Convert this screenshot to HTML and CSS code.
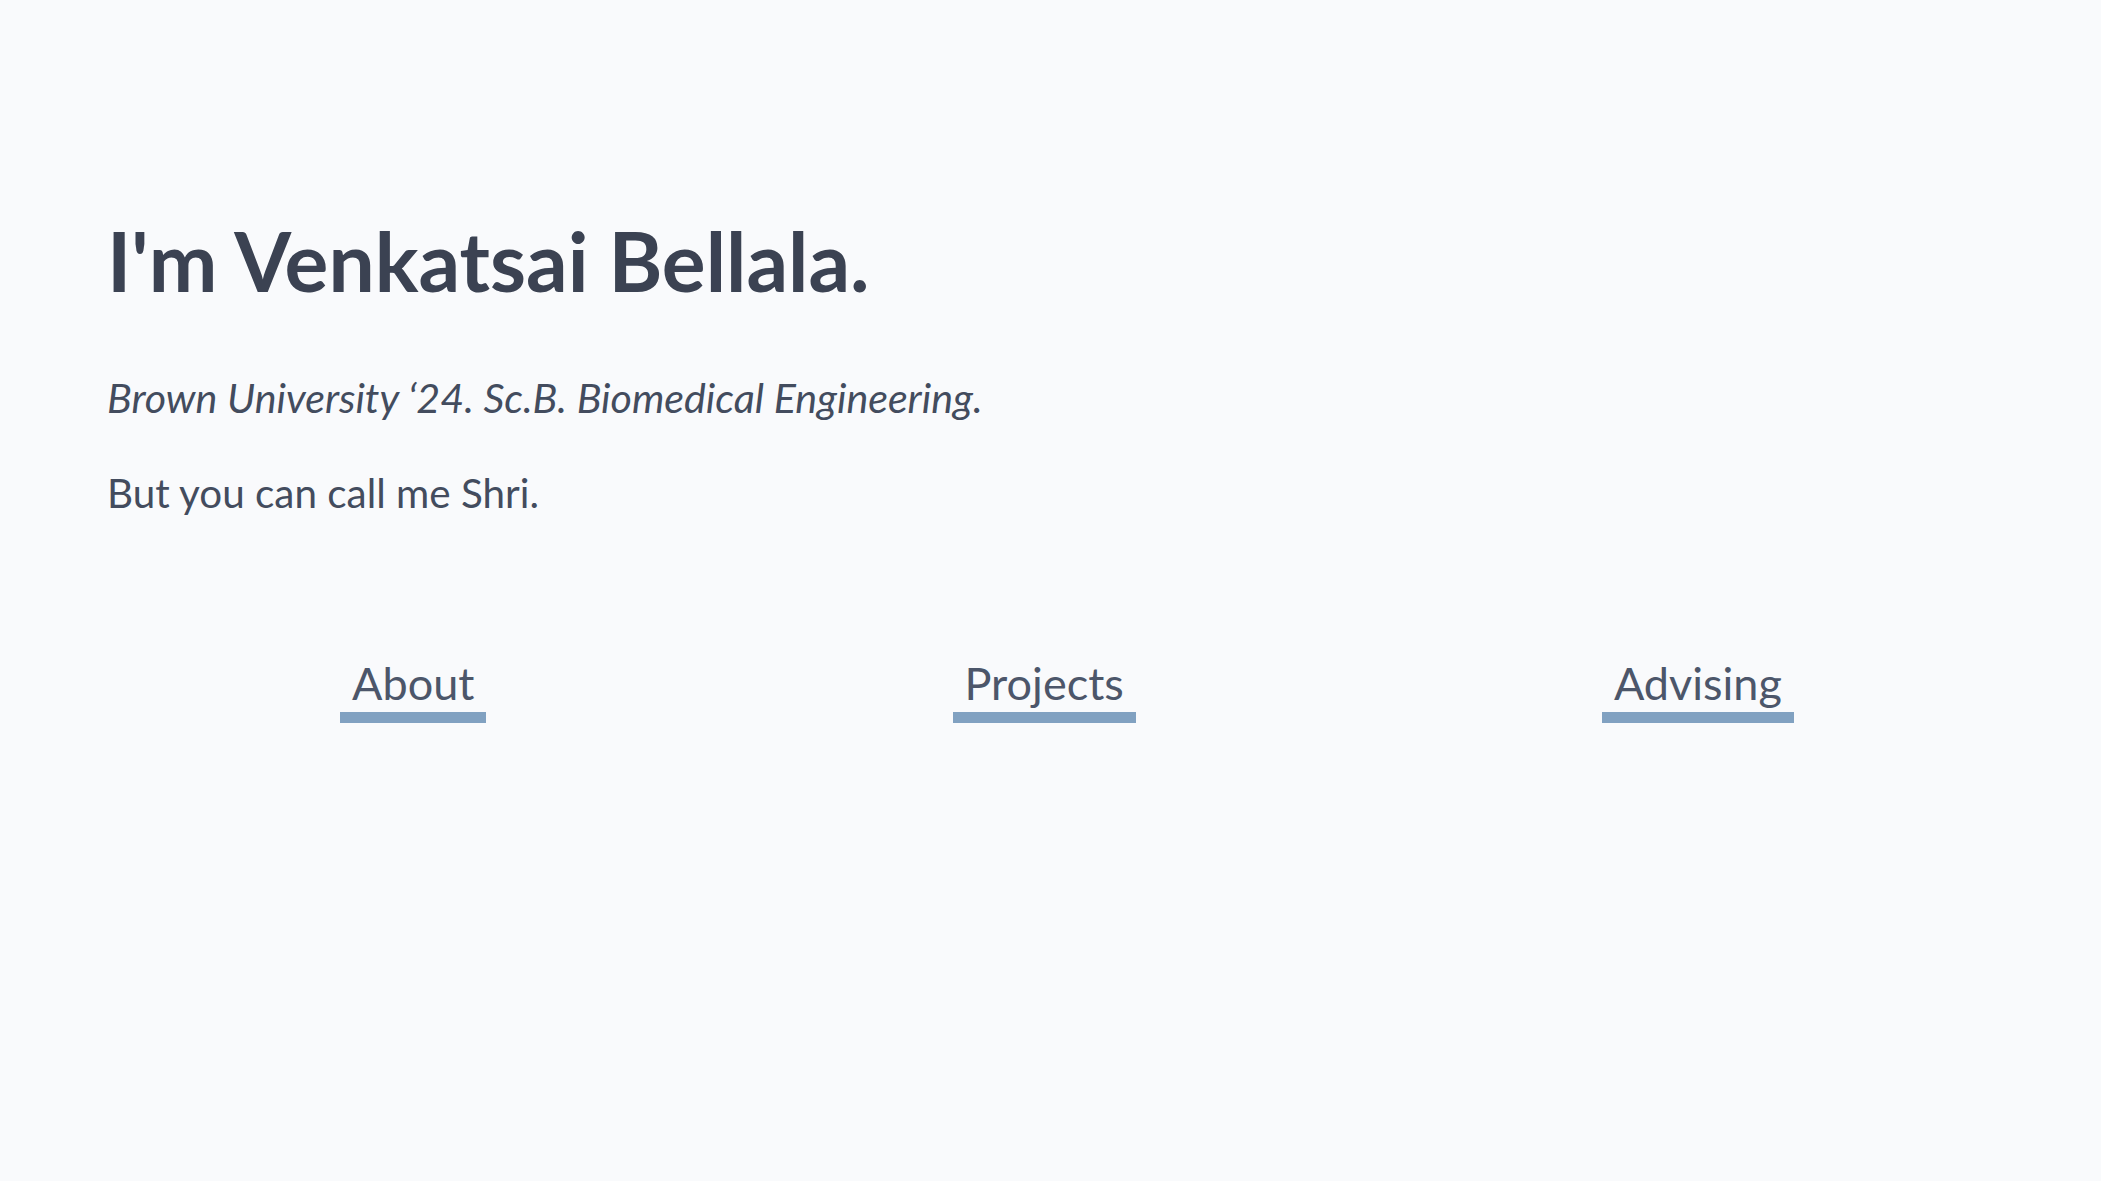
FILE: index.html
```html
<!DOCTYPE html>
<html lang="en">
<head>
<meta charset="utf-8">
<title>Venkatsai Bellala</title>
<link rel="stylesheet" href="styles.css">
</head>
<body>
<main class="page">
  <header class="intro">
    <h1 class="title">I'm Venkatsai Bellala.</h1>
    <p class="subtitle">Brown University ‘24. Sc.B. Biomedical Engineering.</p>
    <p class="tagline">But you can call me Shri.</p>
  </header>
  <nav class="nav">
    <a class="nav-link" href="#about">About</a>
    <a class="nav-link" href="#projects">Projects</a>
    <a class="nav-link" href="#advising">Advising</a>
  </nav>
</main>
</body>
</html>
```

FILE: styles.css
```css
html, body {
  margin: 0;
  padding: 0;
  background: #f9fafc;
}

body {
  font-family: Lato, "Open Sans", "Liberation Sans", sans-serif;
  color: #3b4252;
  min-height: 1181px;
}

.page {
  padding: 211px 74px 0 107px;
}

.intro {
  display: flex;
  flex-direction: column;
}

.title {
  margin: 0;
  font-size: 82px;
  font-weight: 700;
  line-height: 1.2;
  color: #3b4252;
}

.subtitle {
  margin: 64px 0 0;
  font-size: 41.2px;
  font-style: italic;
  font-weight: 400;
  line-height: 48px;
  color: #434c5e;
}

.tagline {
  margin: 48px 0 0;
  font-size: 40.4px;
  font-weight: 400;
  line-height: 48px;
  color: #434c5e;
}

.nav {
  margin-top: 139px;
  display: flex;
  justify-content: space-around;
  align-items: flex-start;
}

.nav-link {
  display: block;
  padding: 0 12px 2px;
  font-size: 45px;
  line-height: 54px;
  color: #4c566a;
  text-decoration: none;
  border-bottom: 11px solid #81a1c1;
}
```
